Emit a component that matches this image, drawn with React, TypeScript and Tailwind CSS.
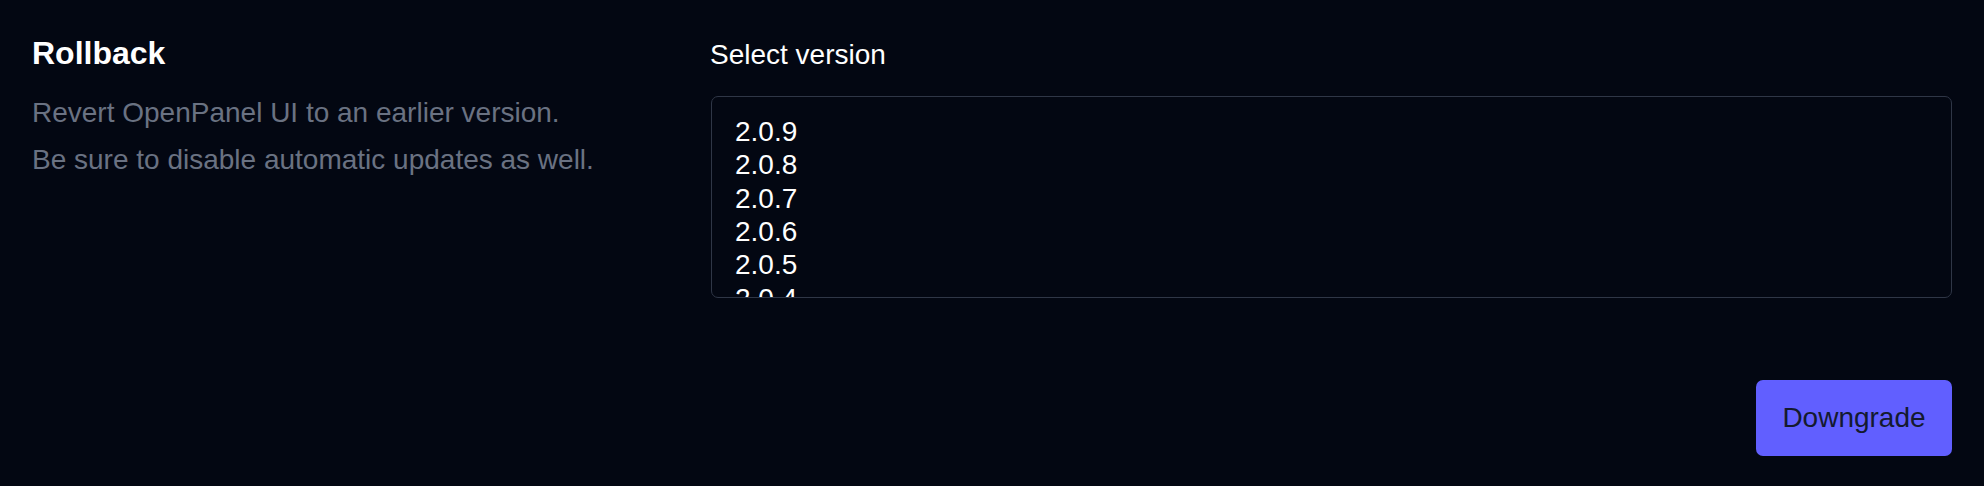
import React from 'react';

const versions = ['2.0.9', '2.0.8', '2.0.7', '2.0.6', '2.0.5', '2.0.4', '2.0.3', '2.0.2', '2.0.1', '2.0.0'];

export default function App() {
  return (
    <div
      className="min-h-[486px] w-full bg-[#030712] px-[32px] pt-[34px] pb-[30px]"
      style={{ fontFamily: '"Liberation Sans", Arial, sans-serif' }}
    >
      <div className="flex">
        {/* description */}
        <div className="w-[679px] shrink-0">
          <h2 className="text-[32px] font-bold leading-[38px] text-white">Rollback</h2>
          <div className="mt-[17px] text-[28px] leading-[47px] text-gray-500">
            <p>Revert OpenPanel UI to an earlier version.</p>
            <p>Be sure to disable automatic updates as well.</p>
          </div>
        </div>

        {/* form */}
        <div className="flex min-w-0 flex-1 flex-col">
          <label className="-ml-px text-[28px] leading-[42px] text-white">Select version</label>
          <div className="mt-[20px] h-[202px] overflow-hidden rounded-[7px] border border-[#2f3646] bg-[#030712] pl-[23px] pt-[18px]">
            {versions.map((v) => (
              <div key={v} className="text-[28px] leading-[33.33px] text-white">
                {v}
              </div>
            ))}
          </div>
          <button className="mt-[82px] flex h-[76px] w-[196px] items-center justify-center self-end rounded-[7px] bg-indigo-500 text-[28px] text-[#141a2e]">
            Downgrade
          </button>
        </div>
      </div>
    </div>
  );
}
